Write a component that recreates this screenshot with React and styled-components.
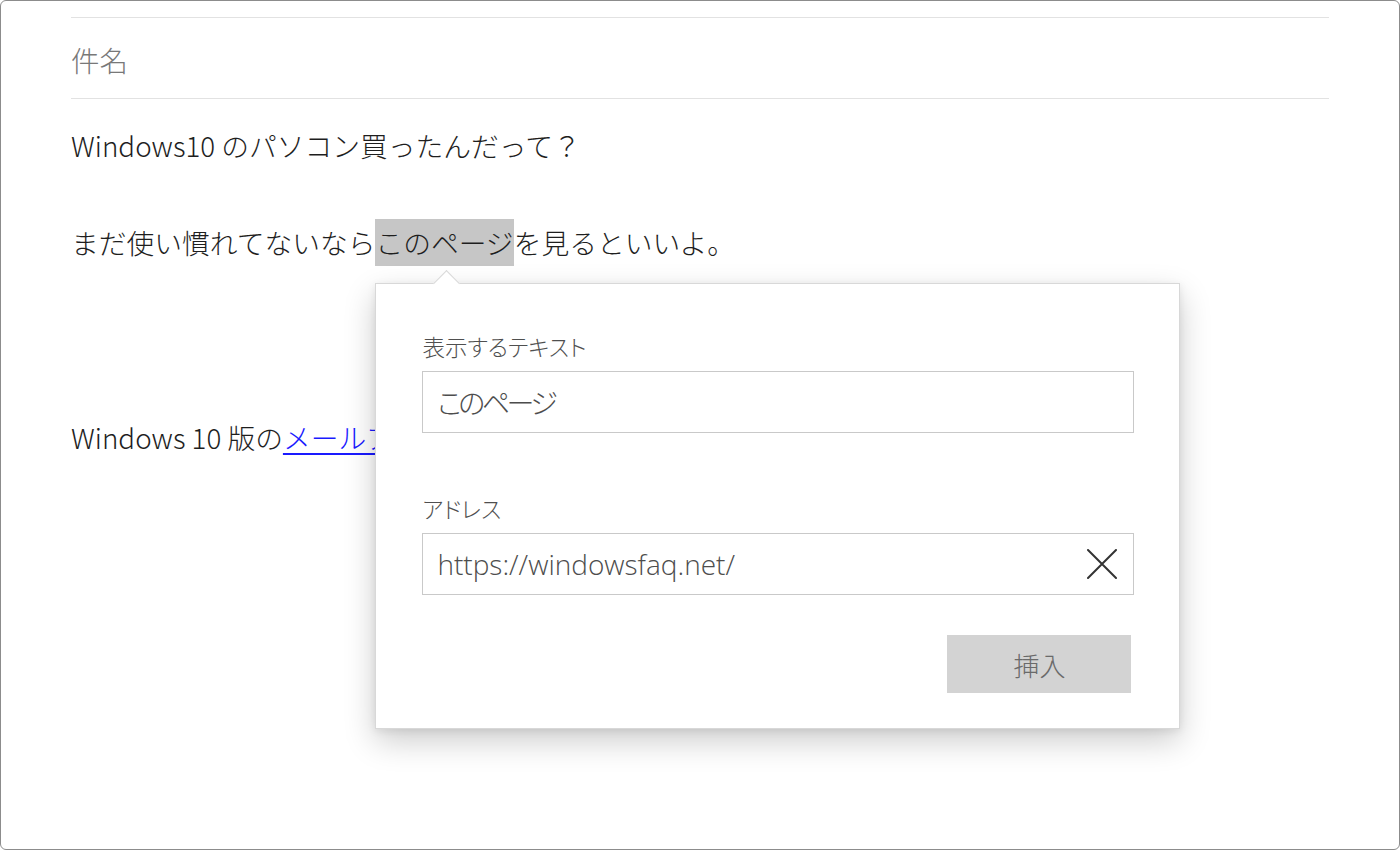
import React from 'react'
import styled, { createGlobalStyle } from 'styled-components'

const GlobalStyle = createGlobalStyle`
  html, body {
    margin: 0;
    padding: 0;
    background: #fff;
  }
  body {
    font-family: "Noto Sans CJK JP", "Noto Sans", sans-serif;
  }
  * { box-sizing: border-box; }
`

const Frame = styled.div`
  width: 1400px;
  height: 850px;
  border: 1px solid #8c8c8c;
  border-radius: 6px;
  padding: 16px 70px 0 70px;
  background: #fff;
  overflow: hidden;
`

const SubjectRow = styled.div`
  height: 82px;
  border-top: 1px solid #e2e2e2;
  border-bottom: 1px solid #e2e2e2;
  display: flex;
  align-items: center;
  font-size: 28.5px;
  font-weight: 300;
  color: #787878;
  padding-top: 2px;
`

const MessageBody = styled.div`
  padding-top: 22px;
  font-size: 27.75px;
  font-weight: 300;
  line-height: 48.6px;
  color: #1e1e1e;
`

const Paragraph = styled.p`
  margin: 0 0 ${p => (p.$blankLines || 0) * 48.6}px 0;
  white-space: nowrap;
`

const Selected = styled.span`
  position: relative;
  background: #c6c6c6;
  padding: 3px 0 4px;
`

const Link = styled.a`
  color: #1a1aff;
  text-decoration: underline;
  text-decoration-thickness: 2px;
  text-underline-offset: 4px;
`

const Popup = styled.div`
  position: absolute;
  left: 0;
  top: calc(100% + 17px);
  width: 805px;
  padding: 47px 45px 35px 46px;
  background: #fff;
  border: 1px solid #d8d8d8;
  box-shadow: 0 12px 30px rgba(0, 0, 0, 0.2), 0 2px 8px rgba(0, 0, 0, 0.08);
  font-size: 16px;
  font-weight: 400;
  line-height: normal;
  white-space: normal;
  cursor: default;

  &::before {
    content: "";
    position: absolute;
    top: -10px;
    left: 61px;
    width: 18px;
    height: 18px;
    background: #fff;
    border-left: 1px solid #d8d8d8;
    border-top: 1px solid #d8d8d8;
    transform: rotate(45deg);
  }
`

const Field = styled.div`
  display: flex;
  flex-direction: column;
  gap: 10px;
  & + & {
    margin-top: 60px;
  }
`

const Label = styled.label`
  font-size: 22.5px;
  font-weight: 300;
  line-height: 30px;
  color: #4f4f4f;
  font-feature-settings: "palt";
`

const InputBox = styled.div`
  height: 62px;
  border: 1px solid #c9c9c9;
  display: flex;
  align-items: center;
  padding: 0 15px 0 14px;
`

const TextInput = styled.input`
  flex: 1;
  min-width: 0;
  border: none;
  outline: none;
  padding: 0;
  background: transparent;
  font-family: "Open Sans", "Noto Sans CJK JP", sans-serif;
  font-size: 28px;
  font-weight: 300;
  color: #4d4d4d;
  letter-spacing: ${p => (p.$tight ? '-3.5px' : '0')};
  font-feature-settings: "palt";
`

const ClearButton = styled.button`
  width: 32px;
  height: 32px;
  border: none;
  background: none;
  padding: 0;
  display: flex;
  align-items: center;
  justify-content: center;
  color: #333;
`

const Actions = styled.div`
  display: flex;
  justify-content: flex-end;
  margin-top: 40px;
  padding-right: 3px;
`

const InsertButton = styled.button`
  width: 184px;
  height: 58px;
  border: none;
  background: #d3d3d3;
  color: #6a6a6a;
  font-family: "Noto Sans CJK JP", sans-serif;
  font-size: 26px;
  font-weight: 300;
`

const CloseIcon = () => (
  <svg width="30" height="30" viewBox="0 0 30 30" fill="none">
    <path d="M1 1 L29 29 M29 1 L1 29" stroke="currentColor" strokeWidth="2" strokeLinecap="round" />
  </svg>
)

export default function App() {
  return (
    <>
      <GlobalStyle />
      <Frame>
        <SubjectRow>件名</SubjectRow>
        <MessageBody>
          <Paragraph $blankLines={1}>Windows10 のパソコン買ったんだって？</Paragraph>
          <Paragraph $blankLines={3}>
            まだ使い慣れてないなら
            <Selected>
              このページ
              <Popup>
                <Field>
                  <Label>表示するテキスト</Label>
                  <InputBox>
                    <TextInput $tight readOnly value="このページ" />
                  </InputBox>
                </Field>
                <Field>
                  <Label>アドレス</Label>
                  <InputBox>
                    <TextInput readOnly value="https://windowsfaq.net/" />
                    <ClearButton aria-label="クリア">
                      <CloseIcon />
                    </ClearButton>
                  </InputBox>
                </Field>
                <Actions>
                  <InsertButton>挿入</InsertButton>
                </Actions>
              </Popup>
            </Selected>
            を見るといいよ。
          </Paragraph>
          <Paragraph>
            Windows 10 版の<Link href="#">メールアプリ</Link>の使い方も載ってるよ。
          </Paragraph>
        </MessageBody>
      </Frame>
    </>
  )
}
